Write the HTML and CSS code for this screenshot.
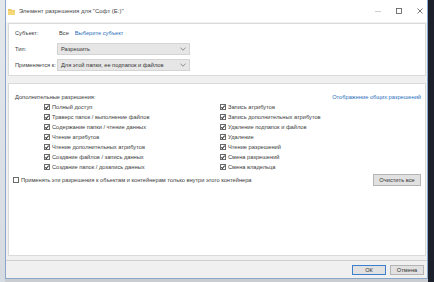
FILE: index.html
```html
<!DOCTYPE html>
<html lang="ru">
<head>
<meta charset="utf-8">
<link rel="stylesheet" href="styles.css">
</head>
<body>
<div class="desk-left"></div>
<div class="window">
  <div class="titlebar">
    <svg class="folder" width="7" height="7" viewBox="0 0 7 7"><path d="M0 1h3l1 1h3v5H0z" fill="#e8c25a"/><path d="M0 2.5h7v4.5H0z" fill="#f6d77a"/></svg>
    <span class="title">Элемент разрешения для "Софт (E:)"</span>
    <div class="controls">
      <svg width="8" height="8" viewBox="0 0 8 8"><path d="M1 4.5h6" stroke="#c4c4c4" stroke-width="0.8"/></svg>
      <svg width="8" height="8" viewBox="0 0 8 8"><rect x="1.5" y="1.5" width="5" height="5" fill="none" stroke="#555" stroke-width="0.8"/></svg>
      <svg width="8" height="8" viewBox="0 0 8 8"><path d="M1.5 1.5l5 5M6.5 1.5l-5 5" stroke="#555" stroke-width="0.8"/></svg>
    </div>
  </div>
  <div class="content">
    <div class="panel top">
      <div class="row subj"><span class="lbl">Субъект:</span><span>Все</span><span class="link">Выберите субъект</span></div>
      <div class="row sel"><span class="lbl">Тип:</span><div class="dropdown"><span>Разрешить</span><svg width="6" height="4" viewBox="0 0 6 4"><path d="M0.5 0.8l2.5 2.4 2.5-2.4" fill="none" stroke="#666" stroke-width="0.7"/></svg></div></div>
      <div class="row sel"><span class="lbl">Применяется к:</span><div class="dropdown"><span>Для этой папки, ее подпапок и файлов</span><svg width="6" height="4" viewBox="0 0 6 4"><path d="M0.5 0.8l2.5 2.4 2.5-2.4" fill="none" stroke="#666" stroke-width="0.7"/></svg></div></div>
    </div>
    <div class="panel main">
      <div class="head"><span>Дополнительные разрешения:</span><span class="link">Отображение общих разрешений</span></div>
      <div class="grid">
        <div class="col">
          <div class="item"><span class="cb on"></span>Полный доступ</div>
          <div class="item"><span class="cb on"></span>Траверс папок / выполнение файлов</div>
          <div class="item"><span class="cb on"></span>Содержание папки / чтение данных</div>
          <div class="item"><span class="cb on"></span>Чтение атрибутов</div>
          <div class="item"><span class="cb on"></span>Чтение дополнительных атрибутов</div>
          <div class="item"><span class="cb on"></span>Создание файлов / запись данных</div>
          <div class="item"><span class="cb on"></span>Создание папок / дозапись данных</div>
        </div>
        <div class="col">
          <div class="item"><span class="cb on"></span>Запись атрибутов</div>
          <div class="item"><span class="cb on"></span>Запись дополнительных атрибутов</div>
          <div class="item"><span class="cb on"></span>Удаление подпапок и файлов</div>
          <div class="item"><span class="cb on"></span>Удаление</div>
          <div class="item"><span class="cb on"></span>Чтение разрешений</div>
          <div class="item"><span class="cb on"></span>Смена разрешений</div>
          <div class="item"><span class="cb on"></span>Смена владельца</div>
        </div>
      </div>
      <div class="apply">
        <div class="item"><span class="cb"></span>Применять эти разрешения к объектам и контейнерам только внутри этого контейнера</div>
        <button class="btn clear">Очистить все</button>
      </div>
    </div>
    <div class="footer">
      <button class="btn ok">ОК</button>
      <button class="btn">Отмена</button>
    </div>
  </div>
</div>
<div class="desk-right"></div>
</body>
</html>
```
FILE: styles.css
```css
* { box-sizing: border-box; }
html, body { margin: 0; padding: 0; }
body {
  width: 434px;
  height: 282px;
  overflow: hidden;
  display: flex;
  font-family: "Liberation Sans", Arial, sans-serif;
  font-size: 5.7px;
  color: #3a3a3a;
  background: #c9ccd1;
}
.desk-left {
  width: 5px;
  background: linear-gradient(#e4e7ec, #d6dbe2);
}
.desk-right {
  width: 6px;
  background: #1b202b;
}
.window {
  flex: 1;
  display: flex;
  flex-direction: column;
  border-left: 1px solid #8aa6c8;
  border-right: 1px solid #8aa6c8;
  border-bottom: 1px solid #8aa6c8;
  height: 279px;
  background: #f0f0f0;
}
.titlebar {
  height: 22px;
  background: #fff;
  display: flex;
  align-items: center;
  padding-left: 2px;
  flex-shrink: 0;
}
.folder { margin-right: 4px; }
.title { color: #444; font-size: 6px; }
.controls {
  margin-left: auto;
  display: flex;
  gap: 13px;
  padding-right: 3px;
}
.content {
  flex: 1;
  display: flex;
  flex-direction: column;
  padding: 1px 1px 0 2px;
}
.panel {
  background: #fff;
  border: 1px solid #dadada;
}
.panel.top {
  height: 53px;
  padding: 4px 0 0 6px;
}
.row { display: flex; align-items: center; }
.row.subj { height: 10px; gap: 6px; }
.row.subj .lbl { width: 38px; }
.row.sel { height: 12px; margin-top: 4px; }
.row.subj + .row.sel { margin-top: 5px; }
.lbl { width: 42px; flex-shrink: 0; white-space: nowrap; }
.link { color: #2a6fba; }
.dropdown {
  width: 133px;
  height: 12px;
  background: #e6e6e6;
  border: 1px solid #d4d4d4;
  display: flex;
  align-items: center;
  justify-content: space-between;
  padding: 0 3px 0 3px;
  color: #333;
}
.panel.main {
  margin-top: 7px;
  height: 173px;
  padding: 7px 4px 0 6px;
}
.head {
  height: 11px;
  display: flex;
  align-items: center;
  justify-content: space-between;
}
.grid {
  display: flex;
  margin-left: 29px;
}
.col { width: 176px; }
.item {
  height: 10px;
  display: flex;
  align-items: center;
  white-space: nowrap;
}
.cb {
  width: 6px;
  height: 6px;
  border: 1px solid #6a6a6a;
  background: #fff;
  margin-right: 2px;
  position: relative;
  flex-shrink: 0;
}
.cb.on::after {
  content: "";
  position: absolute;
  left: 1.4px;
  top: 0;
  width: 1.4px;
  height: 2.8px;
  border-right: 0.7px solid #333;
  border-bottom: 0.7px solid #333;
  transform: rotate(40deg);
}
.apply {
  display: flex;
  align-items: center;
  justify-content: space-between;
  margin: 1px 0 0 -2px;
  height: 14px;
}
.btn {
  font-family: inherit;
  font-size: 5.7px;
  color: #333;
  background: #e1e1e1;
  border: 1px solid #b5b5b5;
  padding: 0;
  height: 12px;
  margin: 0;
}
.clear { width: 48px; }
.footer {
  margin-top: 4px;
  border-top: 1px solid #cfcfcf;
  margin-left: -2px;
  margin-right: -1px;
  flex: 1;
  display: flex;
  justify-content: flex-end;
  align-items: flex-start;
  gap: 4px;
  padding: 4px 3px 0 0;
}
.footer .btn { width: 34px; height: 10px; }
.footer .ok { border-color: #3c7fd1; }
```
